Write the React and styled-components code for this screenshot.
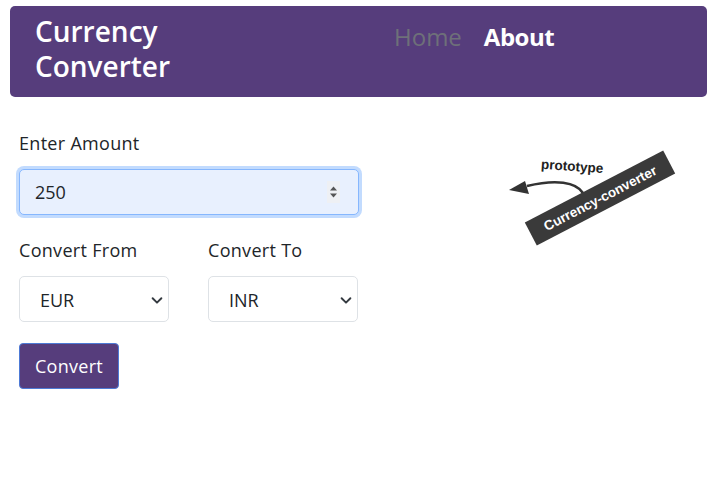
import React from "react";
import styled, { createGlobalStyle } from "styled-components";

const Global = createGlobalStyle`
  html, body { margin: 0; padding: 0; background: #fff; }
  body { font-family: "Open Sans", "Noto Sans", sans-serif; color: #212529; }
  * { box-sizing: border-box; }
`;

const Page = styled.div`
  padding: 6px 8px 0 10px;
`;

const Navbar = styled.nav`
  height: 91px;
  background: #563d7c;
  border-radius: 5px;
  display: grid;
  grid-template-columns: 359px auto;
  align-items: start;
  padding: 8px 0 0 25px;
`;

const Brand = styled.div`
  color: #fff;
  font-weight: 600;
  font-size: 28px;
  line-height: 35px;
`;

const NavLinks = styled.div`
  display: flex;
  gap: 22px;
  padding-top: 7px;
`;

const NavLink = styled.a`
  font-size: 24px;
  line-height: 32px;
  font-weight: ${(p) => (p.$active ? 700 : 400)};
  letter-spacing: ${(p) => (p.$active ? "-0.5px" : "0")};
  color: ${(p) => (p.$active ? "#ffffff" : "#6e7079")};
  text-decoration: none;
`;

const Main = styled.main`
  display: flex;
  align-items: flex-start;
  padding: 33px 0 0 9px;
`;

const Form = styled.form`
  width: 340px;
  display: flex;
  flex-direction: column;
`;

const Label = styled.label`
  display: block;
  font-size: 18px;
  letter-spacing: 0.3px;
  line-height: 27px;
  margin-bottom: 12px;
`;

const Field = styled.div`
  margin-bottom: 22px;
`;

const AmountBox = styled.div`
  height: 46px;
  background: #e8f0fe;
  border: 1px solid #86b7fe;
  border-radius: 5px;
  box-shadow: 0 0 0 3px #c2dbfe;
  display: flex;
  align-items: center;
  justify-content: space-between;
  padding: 0 18px 0 15px;
  font-size: 18px;
`;

const Spinner = styled.span`
  width: 13px;
  height: 22px;
  background: #eef0f4;
  display: flex;
  align-items: center;
  justify-content: center;
`;

const SelectRow = styled.div`
  display: grid;
  grid-template-columns: 150px 150px;
  column-gap: 39px;
  margin-bottom: 21px;
`;

const SelectBox = styled.div`
  height: 46px;
  border: 1px solid #dee2e6;
  border-radius: 5px;
  background: #fff;
  display: flex;
  align-items: center;
  justify-content: space-between;
  padding: 1px 4px 0 20px;
  font-size: 18px;
`;

const Button = styled.button`
  width: 100px;
  height: 46px;
  background: #563d7c;
  color: #fff;
  border: 1.5px solid #4d7ad6;
  border-radius: 4px;
  font-family: inherit;
  font-size: 18px;
  letter-spacing: 0.3px;
  padding: 0;
  cursor: pointer;
`;

const Badge = styled.svg`
  flex: none;
  margin: 12px 0 0 141px;
  display: block;
`;

const Chevron = () => (
  <svg width="14" height="14" viewBox="0 0 16 16">
    <path d="M3 6l5 5 5-5" fill="none" stroke="#343a40" strokeWidth="2.2" strokeLinecap="round" strokeLinejoin="round" />
  </svg>
);

export default function App() {
  return (
    <Page>
      <Global />
      <Navbar>
        <Brand>
          Currency
          <br />
          Converter
        </Brand>
        <NavLinks>
          <NavLink href="#">Home</NavLink>
          <NavLink href="#" $active>About</NavLink>
        </NavLinks>
      </Navbar>
      <Main>
        <Form onSubmit={(e) => e.preventDefault()}>
          <Field>
            <Label>Enter Amount</Label>
            <AmountBox>
              <span>250</span>
              <Spinner>
                <svg width="9" height="14" viewBox="0 0 9 14">
                  <path d="M4.5 1.5L8 5.5H1z" fill="#555" />
                  <path d="M4.5 12.5L8 8.5H1z" fill="#555" />
                </svg>
              </Spinner>
            </AmountBox>
          </Field>
          <SelectRow>
            <div>
              <Label>Convert From</Label>
              <SelectBox>
                <span>EUR</span>
                <Chevron />
              </SelectBox>
            </div>
            <div>
              <Label>Convert To</Label>
              <SelectBox>
                <span>INR</span>
                <Chevron />
              </SelectBox>
            </div>
          </SelectRow>
          <div>
            <Button type="submit">Convert</Button>
          </div>
        </Form>
        <Badge width="195" height="115" viewBox="0 0 195 115">
          <text x="41" y="29" fontFamily="'Liberation Sans', Arial, sans-serif" fontWeight="700" fontSize="13.5" fill="#222" transform="rotate(4 73 25)">prototype</text>
          <path d="M83 51 C 76 40, 56 37, 27 44" fill="none" stroke="#333" strokeWidth="2.6" />
          <polygon points="9,48 25,39 29,52" fill="#333" />
          <g transform="translate(100 56) rotate(-27.5)">
            <rect x="-78" y="-13" width="156" height="26" fill="#3a3a3a" />
            <text x="0" y="5" textAnchor="middle" fontFamily="'Liberation Sans', Arial, sans-serif" fontWeight="700" fontSize="13.5" fill="#fff">Currency-converter</text>
          </g>
        </Badge>
      </Main>
    </Page>
  );
}
